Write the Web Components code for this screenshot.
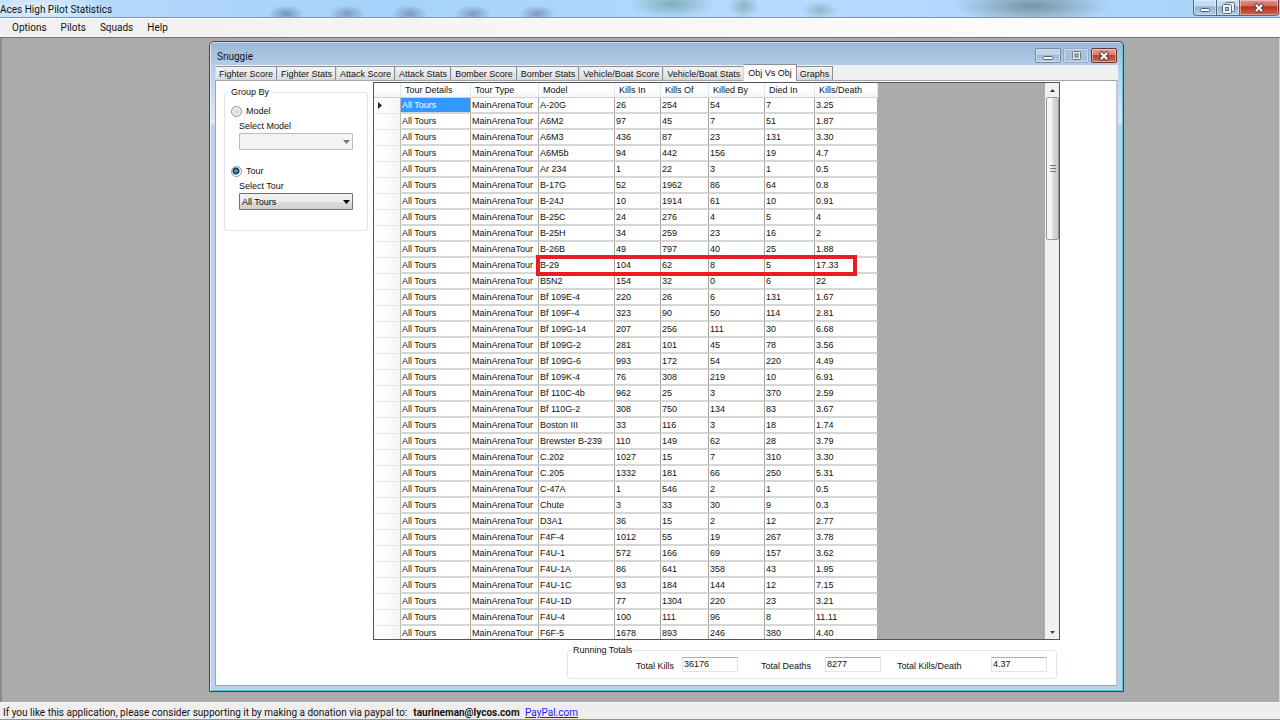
<!DOCTYPE html>
<html lang="en">
<head>
<meta charset="utf-8">
<title>Aces High Pilot Statistics</title>
<style>
  html, body { height: 100%; margin: 0; }
  body { overflow: hidden; font: 9px/12px "Liberation Sans", Arial, sans-serif; color: #111; }
</style>
</head>
<body>
<pilot-app>
  <mdi-window caption="Snuggie">
    <tab-strip slot="tabs" active="Obj Vs Obj"></tab-strip>
    <group-by></group-by>
    <stats-grid></stats-grid>
    <running-totals slot="footer"></running-totals>
  </mdi-window>
</pilot-app>

<script>
class CaptionButtons extends HTMLElement {
  constructor() {
    super();
    this.attachShadow({ mode: "open" });
    this.shadowRoot.innerHTML = `
      <style>
        :host { display: flex; gap: 2px; }
        button {
          display: flex;
          align-items: center;
          justify-content: center;
          box-sizing: border-box;
          width: 26px;
          height: 15px;
          margin: 0;
          padding: 0;
          border: 1px solid #6f8bab;
          border-radius: 2px;
          background: linear-gradient(#bfd3e9 45%, #9db8d5 50%, #b4cce5);
          box-shadow: inset 0 0 0 1px rgba(255, 255, 255, .4);
        }
        button.max { border-color: #91abc8; background: #a9c3df; }
        button.close {
          border-color: #6b3038;
          background: linear-gradient(#e0a195, #d48071 45%, #bd3f25 50%, #cf6d50);
        }
        svg { display: block; }
        .front { display: none; }
        :host([kind="main"]) { gap: 0; }
        :host([kind="main"]) button {
          width: 23px;
          height: 16px;
          border-color: #53687f;
          border-top: 0;
          border-right: 0;
          border-radius: 0 0 0 4px;
          background: linear-gradient(#c6dcf3 40%, #93b0cf 45%, #aecdec);
        }
        :host([kind="main"]) button.max { border-radius: 0; }
        :host([kind="main"]) button.close {
          width: 40px;
          border-right: 1px solid #6b3038;
          border-radius: 0 0 4px 0;
          background: linear-gradient(#dc9488, #cf6f60 40%, #b9301a 45%, #d0644a);
        }
        :host([kind="main"]) .single { display: none; }
        :host([kind="main"]) .front { display: block; }
      </style>
      <button type="button" class="min" aria-label="Minimize">
        <svg width="14" height="11" viewBox="0 0 14 11"><rect x="2.500" y="6.500" width="9" height="3" rx="1" fill="#fff" stroke="#525f70"/></svg>
      </button>
      <button type="button" class="max" aria-label="Maximize">
        <svg class="single" width="11" height="11" viewBox="0 0 11 11">
          <rect x="1.500" y="1.500" width="8" height="8" rx="1" fill="#e6ebf1" stroke="#6b7889"/>
          <rect x="4" y="4" width="3" height="3" fill="#a9c3df" stroke="#5d6a7b"/>
        </svg>
        <svg class="front" width="13" height="12" viewBox="0 0 13 12">
          <rect x="3.500" y=".5" width="9" height="9" rx="1" fill="#eef3f8" stroke="#5d6a7b"/>
          <rect x=".5" y="2.500" width="9" height="9" rx="1" fill="#eef3f8" stroke="#5d6a7b"/>
          <rect x="3.500" y="5.500" width="3" height="3" fill="#a9c3df" stroke="#5d6a7b"/>
        </svg>
      </button>
      <button type="button" class="close" aria-label="Close">
        <svg width="12" height="10" viewBox="0 0 12 10">
          <path d="M3.500 2.500l5 5M8.500 2.500l-5 5" stroke="#5a3f4a" stroke-width="4" stroke-linecap="square"/>
          <path d="M3.500 2.500l5 5M8.500 2.500l-5 5" stroke="#fff" stroke-width="2" stroke-linecap="square"/>
        </svg>
      </button>
    `;
  }
}

class PilotApp extends HTMLElement {
  constructor() {
    super();
    this.attachShadow({ mode: "open" });
    this.shadowRoot.innerHTML = `
      <style>
        :host { display: flex; flex-direction: column; height: 100vh; background: #ababab; }
        .shell { font-family: Roboto, "Segoe UI", sans-serif; font-size: 10px; }
        header {
          display: flex;
          justify-content: space-between;
          box-sizing: border-box;
          height: 18px;
          padding-right: 1px;
          border-bottom: 1px solid #7b97b5;
          line-height: 19px;
          /* desktop seen through the glass */
          background:
            radial-gradient(ellipse 70px 18px at 40px 9px, #e4f1fe, #e4f1fe00),
            radial-gradient(ellipse 18px 9px at 286px 14px, #7593bb, #7593bb00),
            radial-gradient(ellipse 18px 9px at 347px 14px, #7d9bc2, #7d9bc200),
            radial-gradient(ellipse 18px 9px at 410px 14px, #7b99c4, #7b99c400),
            radial-gradient(ellipse 18px 9px at 473px 14px, #7b99c4, #7b99c400),
            radial-gradient(ellipse 18px 9px at 537px 14px, #7b99c4, #7b99c400),
            radial-gradient(ellipse 42px 14px at 672px 4px, #80adb8, #80adb800),
            radial-gradient(ellipse 16px 12px at 744px 6px, #88b5c2, #88b5c200),
            radial-gradient(ellipse 18px 9px at 820px 10px, #8dbac8, #8dbac800),
            radial-gradient(ellipse 80px 18px at 1032px 6px, #7796a4, #7796a400),
            linear-gradient(90deg, #b9dbfa, #a6d2fb 30%, #b5dbff 60%, #aad4fb);
        }
        header caption-buttons { width: 86px; }
        h1 { margin: 0; font: inherit; }
        nav {
          display: flex;
          box-sizing: border-box;
          height: 20px;
          padding-left: 6px;
          border-top: 1px solid #fff;
          border-bottom: 1px solid #767676;
          background: linear-gradient(90deg, #f0f0f0, #fcfcfc 85%);
        }
        nav button {
          margin: 0 2px 0 0;
          padding: 0 6px;
          border: 0;
          background: none;
          color: inherit;
          font: inherit;
        }
        main {
          flex: 1;
          min-height: 0;
          display: flex;
          padding: 3px 155px 10px 207px;
          border-left: 2px solid #8b8b8b;
          border-right: 1px solid #d4d4d4;
        }
        footer {
          box-sizing: border-box;
          height: 18px;
          padding-left: 3px;
          border-top: 1px solid #fafafa;
          border-bottom: 1px solid #8796a6;
          background: #f0eded;
          line-height: 20px;
          white-space: nowrap;
        }
        footer b { margin: 0 3px 0 6px; }
        footer > * { line-height: 16px; }
        a { color: #1a1aff; }
      </style>
      <header class="shell"><h1>Aces High Pilot Statistics</h1><caption-buttons kind="main"></caption-buttons></header>
      <nav class="shell">
        <button type="button">Options</button><button type="button">Pilots</button><button type="button">Squads</button><button type="button">Help</button>
      </nav>
      <main><slot></slot></main>
      <footer class="shell">If you like this application, please consider supporting it by making a donation via paypal to:<b>taurineman@lycos.com</b> <a href="#">PayPal.com</a></footer>
    `;
  }
}

class MdiWindow extends HTMLElement {
  constructor() {
    super();
    this.attachShadow({ mode: "open" });
    this.shadowRoot.innerHTML = `
      <style>
        :host {
          flex: 1;
          min-width: 0;
          display: flex;
          flex-direction: column;
          box-sizing: border-box;
          padding: 0 5px 5px;
          border: 1px solid #3c4650;
          border-radius: 5px 5px 0 0;
          background: linear-gradient(#9bb6d4, #b4cee9 24px, #dce9f6 80px, #b9d1ea 84px);
          box-shadow: inset 1px 0 #e3eefa, inset -1px -1px #5cc4dc, inset 0 1px #cbdcee;
        }
        header {
          display: flex;
          align-items: center;
          justify-content: space-between;
          height: 23px;
          padding: 0 1px 0 2px;
        }
        h2 { margin: 0; padding-top: 6px; font: 10px/12px Roboto, "Segoe UI", sans-serif; }
        caption-buttons { padding-top: 4px; }
        .client {
          flex: 1;
          min-height: 0;
          display: flex;
          flex-direction: column;
          background: #f0f0f0;
        }
        .page {
          flex: 1;
          min-height: 0;
          display: flex;
          flex-direction: column;
          padding: 1px 56px 6px 8px;
          border: 1px solid #a0a3a8;
          border-right: 2px solid #c5c8d0;
          background: #fff;
        }
        .row { flex: 1; min-height: 0; display: flex; gap: 5px; }
      </style>
      <header><h2></h2><caption-buttons></caption-buttons></header>
      <div class="client">
        <slot name="tabs"></slot>
        <div class="page">
          <div class="row"><slot></slot></div>
          <slot name="footer"></slot>
        </div>
      </div>
    `;
    this.shadowRoot.querySelector("h2").textContent = this.getAttribute("caption");
  }
}

class TabStrip extends HTMLElement {
  constructor() {
    super();
    this.attachShadow({ mode: "open" });
    const active = this.getAttribute("active");
    const tabs = ["Fighter Score", "Fighter Stats", "Attack Score", "Attack Stats", "Bomber Score",
      "Bomber Stats", "Vehicle/Boat Score", "Vehicle/Boat Stats", "Obj Vs Obj", "Graphs"];
    this.shadowRoot.innerHTML = `
      <style>
        :host { display: flex; align-items: flex-end; height: 15px; }
        button {
          box-sizing: border-box;
          height: 14px;
          margin: 0;
          padding: 0 3px;
          border: 1px solid #8c8f96;
          border-left-color: #d8d8d8;
          border-bottom: 0;
          background: linear-gradient(#f3f3f3, #e9e9e9 50%, #d8d8d8);
          color: inherit;
          font: inherit;
          line-height: 12px;
          white-space: nowrap;
        }
        button[aria-selected="true"] {
          height: 17px;
          margin: 0 -1px -1px;
          padding: 0 4px;
          background: #fff;
          line-height: 13px;
          z-index: 1;
        }
      </style>
      ${tabs.map((t) => `<button type="button" role="tab" aria-selected="${t === active}">${t}</button>`).join("")}
    `;
  }
}

class GroupBy extends HTMLElement {
  constructor() {
    super();
    this.attachShadow({ mode: "open" });
    const arrow = `<svg width="7" height="4" viewBox="0 0 7 4"><path d="M0 0h7L3.500 4z" fill="currentColor"/></svg>`;
    this.shadowRoot.innerHTML = `
      <style>
        :host { display: block; width: 144px; padding-top: 4px; }
        fieldset {
          margin: 0;
          padding: 7px 14px 20px 6px;
          border: 1px solid #dde6ec;
          border-radius: 3px;
        }
        legend { margin-left: -2px; padding: 0 2px; }
        .option { display: flex; align-items: center; gap: 4px; height: 12px; }
        .option + .field + .option { margin-top: 15px; }
        input {
          appearance: none;
          box-sizing: border-box;
          width: 11px;
          height: 11px;
          margin: 0;
          border: 1px solid #8e8f8f;
          border-radius: 50%;
          background: radial-gradient(circle, #d4d6d8, #eee 55%, #fff);
        }
        input:checked { background: radial-gradient(circle at 4px 4px, #5cc5ee, #0b3552 3px, #fff 4px); }
        .field { display: flex; flex-direction: column; gap: 1px; margin: 3px 0 0 8px; }
        .combo { display: grid; grid-template-columns: 1fr 14px; align-items: center; color: #000; }
        select {
          grid-area: 1 / 1 / 2 / 3;
          appearance: none;
          box-sizing: border-box;
          width: 100%;
          height: 17px;
          margin: 0;
          padding: 0 14px 0 2px;
          border: 1px solid #707070;
          border-radius: 1px;
          background: linear-gradient(#f2f2f2, #ebebeb 50%, #ddd 50%, #cfcfcf);
          color: #000;
          font: inherit;
        }
        select:disabled { border-color: #b8bcbf; background: #f3f3f3; opacity: 1; }
        .off { color: #777; }
        .combo svg { grid-area: 1 / 2; pointer-events: none; z-index: 1; justify-self: center; }
      </style>
      <fieldset>
        <legend>Group By</legend>
        <div class="option"><input type="radio" name="by" id="model"><label for="model">Model</label></div>
        <div class="field">
          <label for="selModel">Select Model</label>
          <div class="combo off"><select id="selModel" disabled></select>${arrow}</div>
        </div>
        <div class="option"><input type="radio" name="by" id="tour" checked><label for="tour">Tour</label></div>
        <div class="field">
          <label for="selTour">Select Tour</label>
          <div class="combo"><select id="selTour"><option>All Tours</option></select>${arrow}</div>
        </div>
      </fieldset>
    `;
  }
}

const ROWS = [
  ["A-20G", 26, 254, 54, 7, "3.25"],
  ["A6M2", 97, 45, 7, 51, "1.87"],
  ["A6M3", 436, 87, 23, 131, "3.30"],
  ["A6M5b", 94, 442, 156, 19, "4.7"],
  ["Ar 234", 1, 22, 3, 1, "0.5"],
  ["B-17G", 52, 1962, 86, 64, "0.8"],
  ["B-24J", 10, 1914, 61, 10, "0.91"],
  ["B-25C", 24, 276, 4, 5, "4"],
  ["B-25H", 34, 259, 23, 16, "2"],
  ["B-26B", 49, 797, 40, 25, "1.88"],
  ["B-29", 104, 62, 8, 5, "17.33"],
  ["B5N2", 154, 32, 0, 6, "22"],
  ["Bf 109E-4", 220, 26, 6, 131, "1.67"],
  ["Bf 109F-4", 323, 90, 50, 114, "2.81"],
  ["Bf 109G-14", 207, 256, 111, 30, "6.68"],
  ["Bf 109G-2", 281, 101, 45, 78, "3.56"],
  ["Bf 109G-6", 993, 172, 54, 220, "4.49"],
  ["Bf 109K-4", 76, 308, 219, 10, "6.91"],
  ["Bf 110C-4b", 962, 25, 3, 370, "2.59"],
  ["Bf 110G-2", 308, 750, 134, 83, "3.67"],
  ["Boston III", 33, 116, 3, 18, "1.74"],
  ["Brewster B-239", 110, 149, 62, 28, "3.79"],
  ["C.202", 1027, 15, 7, 310, "3.30"],
  ["C.205", 1332, 181, 66, 250, "5.31"],
  ["C-47A", 1, 546, 2, 1, "0.5"],
  ["Chute", 3, 33, 30, 9, "0.3"],
  ["D3A1", 36, 15, 2, 12, "2.77"],
  ["F4F-4", 1012, 55, 19, 267, "3.78"],
  ["F4U-1", 572, 166, 69, 157, "3.62"],
  ["F4U-1A", 86, 641, 358, 43, "1.95"],
  ["F4U-1C", 93, 184, 144, 12, "7.15"],
  ["F4U-1D", 77, 1304, 220, 23, "3.21"],
  ["F4U-4", 100, 111, 96, 8, "11.11"],
  ["F6F-5", 1678, 893, 246, 380, "4.40"]
];

class StatsGrid extends HTMLElement {
  constructor() {
    super();
    this.attachShadow({ mode: "open" });
    const heads = ["Tour Details", "Tour Type", "Model", "Kills In", "Kills Of", "Killed By", "Died In", "Kills/Death"];
    const widths = [27, 70, 68, 76, 46, 48, 56, 50, 63];
    this.shadowRoot.innerHTML = `
      <style>
        :host {
          flex: 1;
          min-width: 0;
          display: flex;
          justify-content: space-between;
          overflow: hidden;
          border: 1px solid #555;
          background: #ababab;
        }
        table { align-self: flex-start; width: 504px; table-layout: fixed; border-collapse: separate; border-spacing: 0; }
        th, td {
          box-sizing: border-box;
          padding: 0 0 0 1px;
          text-align: left;
          font-weight: normal;
          white-space: nowrap;
        }
        thead th {
          height: 15px;
          padding-left: 4px;
          border-right: 1px solid #e3e5e8;
          background: linear-gradient(#fff 50%, #f3f4f6);
          border-bottom: 1px solid #cfd2d6;
        }
        tbody td {
          height: 16px;
          border-right: 1px solid #a6a6a6;
          border-bottom: 2px solid #d6d6d6;
          background: #fff;
        }
        tbody th {
          padding-left: 4px;
          border-right: 1px solid #b8b8b8;
          border-bottom: 1px solid #e6e8ea;
          background: linear-gradient(90deg, #fff 25%, #f3f4f6);
        }
        tbody th svg { display: block; }
        td.current { background: #3399ff; color: #fff; }
        .marked { position: relative; }
        /* red frame over the B-29 figures */
        .marked i {
          position: absolute;
          left: -3px;
          top: -3px;
          box-sizing: border-box;
          width: 321px;
          height: 21px;
          border: 4px solid #ec1c24;
          z-index: 1;
        }
        .bar { display: flex; flex-direction: column; flex: none; width: 14px; background: #f0f0f0; }
        .bar button {
          display: flex;
          align-items: center;
          justify-content: center;
          flex: none;
          height: 14px;
          margin: 0;
          padding: 0;
          border: 0;
          background: none;
        }
        .track { flex: 1; }
        .thumb {
          display: flex;
          align-items: center;
          justify-content: center;
          box-sizing: border-box;
          height: 27%;
          margin-left: 1px;
          border: 1px solid #979797;
          border-radius: 2px;
          background: linear-gradient(90deg, #f5f5f5 40%, #d5d6d8 60%, #c8cacd);
        }
      </style>
      <table>
        <colgroup>${widths.map((w) => `<col style="width:${w}px">`).join("")}</colgroup>
        <thead><tr><th></th>${heads.map((h) => `<th scope="col">${h}</th>`).join("")}</tr></thead>
        <tbody>${ROWS.map((row, i) => this.row(row, i)).join("")}</tbody>
      </table>
      <div class="bar">
        <button type="button" aria-label="Scroll up"><svg width="5" height="3" viewBox="0 0 5 3"><path d="M0 3h5L2.500 0z" fill="#333"/></svg></button>
        <div class="track"><div class="thumb"><svg width="6" height="7" viewBox="0 0 6 7"><path d="M0 .5h6M0 3.500h6M0 6.500h6" stroke="#777"/></svg></div></div>
        <button type="button" aria-label="Scroll down"><svg width="5" height="3" viewBox="0 0 5 3"><path d="M0 0h5L2.500 3z" fill="#444"/></svg></button>
      </div>
    `;
  }

  row(row, i) {
    const [model, ...rest] = row;
    const pointer = i === 0 ? `<svg width="4" height="7" viewBox="0 0 4 7"><path d="M0 0v7l4-3.500z" fill="#222"/></svg>` : "";
    const mark = model === "B-29";
    return `<tr>
      <th scope="row">${pointer}</th>
      <td${i === 0 ? ' class="current"' : ""}>All Tours</td>
      <td>MainArenaTour</td>
      <td${mark ? ' class="marked"' : ""}>${model}${mark ? "<i></i>" : ""}</td>
      ${rest.map((v) => `<td>${v}</td>`).join("")}
    </tr>`;
  }
}

class RunningTotals extends HTMLElement {
  constructor() {
    super();
    this.attachShadow({ mode: "open" });
    this.shadowRoot.innerHTML = `
      <style>
        :host { display: flex; justify-content: flex-end; padding: 4px 3px 0 0; }
        fieldset {
          display: grid;
          grid-template-columns: 125px 136px 150px;
          margin: 0;
          padding: 0 9px 6px 68px;
          border: 1px solid #dde6ec;
          border-radius: 3px;
        }
        legend { margin-left: -65px; padding: 0 2px; }
        .field { display: flex; align-items: center; }
        .kills label { width: 46px; }
        .deaths label { width: 64px; }
        .ratio label { width: 94px; }
        label { padding-top: 4px; white-space: nowrap; }
        input {
          box-sizing: border-box;
          width: 56px;
          height: 15px;
          margin: 0;
          padding: 0 1px;
          border: 1px solid #e2e3ea;
          border-top-color: #abadb3;
          background: #fff;
          color: inherit;
          font: inherit;
        }
      </style>
      <fieldset>
        <legend>Running Totals</legend>
        <div class="field kills"><label for="kills">Total Kills</label><input id="kills" value="36176"></div>
        <div class="field deaths"><label for="deaths">Total Deaths</label><input id="deaths" value="8277"></div>
        <div class="field ratio"><label for="ratio">Total Kills/Death</label><input id="ratio" value="4.37"></div>
      </fieldset>
    `;
  }
}

customElements.define("caption-buttons", CaptionButtons);
customElements.define("tab-strip", TabStrip);
customElements.define("group-by", GroupBy);
customElements.define("stats-grid", StatsGrid);
customElements.define("running-totals", RunningTotals);
customElements.define("mdi-window", MdiWindow);
customElements.define("pilot-app", PilotApp);
</script>
</body>
</html>
